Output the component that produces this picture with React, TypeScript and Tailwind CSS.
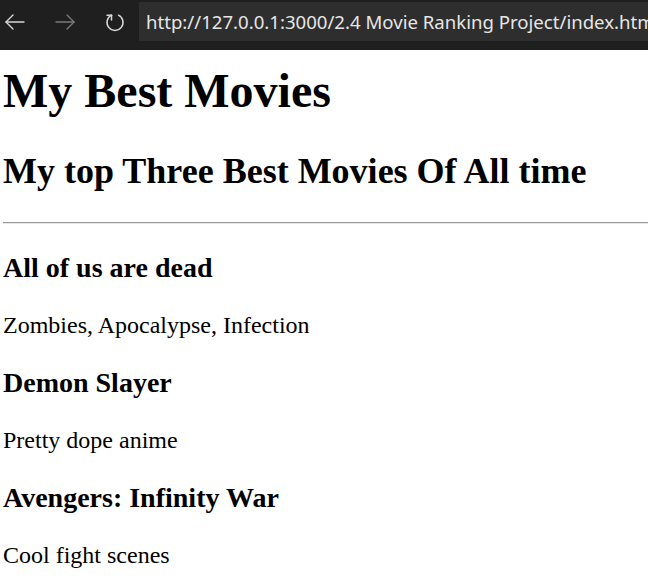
import React from "react";

function BackIcon({ color }: { color: string }) {
  return (
    <svg width="22" height="22" viewBox="0 0 22 22" fill="none" stroke={color} strokeWidth="1.4" strokeLinecap="round" strokeLinejoin="round">
      <path d="M2 11 H20" />
      <path d="M9 4 L2 11 L9 18" />
    </svg>
  );
}

function ForwardIcon({ color }: { color: string }) {
  return (
    <svg width="22" height="22" viewBox="0 0 22 22" fill="none" stroke={color} strokeWidth="1.4" strokeLinecap="round" strokeLinejoin="round">
      <path d="M2 11 H20" />
      <path d="M13 4 L20 11 L13 18" />
    </svg>
  );
}

function ReloadIcon() {
  return (
    <svg width="22" height="22" viewBox="0 0 22 22" fill="none" stroke="#d6d6d6" strokeWidth="1.5" strokeLinecap="round" strokeLinejoin="round">
      <path d="M7.5 4.2 A8 8 0 1 0 14.5 4.2" />
      <path d="M7.5 4.2 L7.5 9" />
      <path d="M7.5 4.2 L3 4.2" />
    </svg>
  );
}

export default function App() {
  const serif = { fontFamily: '"Liberation Serif", "Times New Roman", serif' };
  return (
    <div className="w-[648px] h-[586px] overflow-hidden bg-white">
      <div className="h-[50px] bg-[#1f1f1f] flex items-start">
        <div className="flex items-center h-[41px] pt-[2px]">
          <div className="w-[22px] ml-[4px]"><BackIcon color="#d8d8d8" /></div>
          <div className="w-[22px] ml-[28px]"><ForwardIcon color="#7a7a7a" /></div>
          <div className="w-[22px] ml-[28px]"><ReloadIcon /></div>
        </div>
        <div
          className="ml-[13px] mt-[2px] h-[39px] flex-1 bg-[#2e2e2e] flex items-center pl-[7px] overflow-hidden whitespace-nowrap text-[18.6px] text-[#e6e6e6]"
          style={{ fontFamily: '"Noto Sans", "Open Sans", sans-serif' }}
        >
          http://127.0.0.1:3000/2.4 Movie Ranking Project/index.html
        </div>
      </div>
      <div className="pl-[3px] text-black" style={serif}>
        <h1 className="text-[48px] font-bold leading-[normal] pt-[13px] mb-[32px]">My Best Movies</h1>
        <h2 className="text-[36px] font-bold leading-[normal] mb-[30px]">My top Three Best Movies Of All time</h2>
        <hr className="border-t border-t-[#9a9a9a] border-b border-b-[#e8e8e8] h-0 mb-[28px]" />
        <h3 className="text-[28px] font-bold leading-[normal] mb-[28px]">All of us are dead</h3>
        <p className="text-[24px] leading-[normal] mb-[28px]">Zombies, Apocalypse, Infection</p>
        <h3 className="text-[28px] font-bold leading-[normal] mb-[28px]">Demon Slayer</h3>
        <p className="text-[24px] leading-[normal] mb-[28px]">Pretty dope anime</p>
        <h3 className="text-[28px] font-bold leading-[normal] mb-[28px]">Avengers: Infinity War</h3>
        <p className="text-[24px] leading-[normal] mb-[28px]">Cool fight scenes</p>
      </div>
    </div>
  );
}
